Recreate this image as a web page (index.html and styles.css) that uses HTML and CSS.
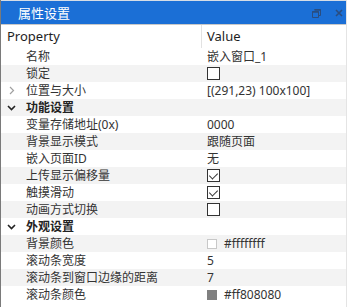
FILE: index.html
```html
<!DOCTYPE html>
<html lang="zh-CN">

<head>
  <meta charset="UTF-8">
  <meta name="viewport" content="width=device-width, initial-scale=1.0">
  <title>属性设置</title>
  <link rel="stylesheet" href="styles.css">
</head>

<body>
  <div class="panel">
    <div class="titulo">
      <span class="titulo-texto">属性设置</span>
      <span class="titulo-botones">
        <svg width="9" height="9" viewBox="0 0 9 9">
          <path d="M2.5 0.5h6v6h-2M0.5 2.5h6v6h-6z" fill="none" stroke="#2a4d80" stroke-width="1"/>
          <path d="M2.5 1h6M0.5 3h6" stroke="#2a4d80" stroke-width="1.4"/>
        </svg>
        <svg width="8" height="8" viewBox="0 0 8 8">
          <path d="M1 1l6 6M7 1l-6 6" stroke="#2a4d80" stroke-width="1.6"/>
        </svg>
      </span>
    </div>

    <div class="cabecera">
      <div class="cab-prop">Property</div>
      <div class="cab-valor">Value</div>
    </div>

    <div class="filas">
      <div class="fila"><div class="nombre"><span class="exp"></span>名称</div><div class="valor">嵌入窗口_1</div></div>
      <div class="fila"><div class="nombre"><span class="exp"></span>锁定</div><div class="valor"><span class="check"></span></div></div>
      <div class="fila"><div class="nombre"><span class="exp">
        <svg width="6" height="9" viewBox="0 0 6 9"><path d="M1 1l3.5 3.5L1 8" fill="none" stroke="#a0a0a0" stroke-width="1.2"/></svg>
      </span>位置与大小</div><div class="valor">[(291,23) 100x100]</div></div>

      <div class="fila grupo"><div class="nombre"><span class="exp">
        <svg width="9" height="6" viewBox="0 0 9 6"><path d="M1 1l3.5 3.5L8 1" fill="none" stroke="#222" stroke-width="1.6"/></svg>
      </span>功能设置</div><div class="valor"></div></div>
      <div class="fila"><div class="nombre"><span class="exp"></span>变量存储地址(0x)</div><div class="valor">0000</div></div>
      <div class="fila"><div class="nombre"><span class="exp"></span>背景显示模式</div><div class="valor">跟随页面</div></div>
      <div class="fila"><div class="nombre"><span class="exp"></span>嵌入页面ID</div><div class="valor">无</div></div>
      <div class="fila"><div class="nombre"><span class="exp"></span>上传显示偏移量</div><div class="valor"><span class="check marcado"></span></div></div>
      <div class="fila"><div class="nombre"><span class="exp"></span>触摸滑动</div><div class="valor"><span class="check marcado"></span></div></div>
      <div class="fila"><div class="nombre"><span class="exp"></span>动画方式切换</div><div class="valor"><span class="check"></span></div></div>

      <div class="fila grupo"><div class="nombre"><span class="exp">
        <svg width="9" height="6" viewBox="0 0 9 6"><path d="M1 1l3.5 3.5L8 1" fill="none" stroke="#222" stroke-width="1.6"/></svg>
      </span>外观设置</div><div class="valor"></div></div>
      <div class="fila"><div class="nombre"><span class="exp"></span>背景颜色</div><div class="valor"><span class="muestra blanco"></span>#ffffffff</div></div>
      <div class="fila"><div class="nombre"><span class="exp"></span>滚动条宽度</div><div class="valor">5</div></div>
      <div class="fila"><div class="nombre"><span class="exp"></span>滚动条到窗口边缘的距离</div><div class="valor">7</div></div>
      <div class="fila"><div class="nombre"><span class="exp"></span>滚动条颜色</div><div class="valor"><span class="muestra gris"></span>#ff808080</div></div>
    </div>
  </div>
</body>

</html>
```

FILE: styles.css
```css
body {
  margin: 0;
  background: #ffffff;
  font-family: "Noto Sans", "Noto Sans CJK SC", sans-serif;
  color: #333333;
}

.panel {
  width: 347px;
  height: 307px;
  box-sizing: border-box;
  border-left: 1px solid #7a7a7a;
  border-right: 1px solid #e4e4e4;
  overflow: hidden;
}

.titulo {
  height: 24px;
  box-sizing: border-box;
  border-top: 1px solid #d6dde6;
  background: #1b6fd6;
  display: flex;
  align-items: center;
  justify-content: space-between;
  padding: 0 3px 0 17px;
}

.titulo-texto {
  color: #ffffff;
  font-family: "Noto Sans CJK SC", sans-serif;
  font-size: 13px;
  line-height: 20px;
}

.titulo-botones {
  display: flex;
  align-items: center;
  gap: 14px;
  padding-top: 1px;
}

.titulo-botones svg {
  display: block;
}

.cabecera {
  height: 24px;
  display: grid;
  grid-template-columns: 201px 1fr;
  border-top: 1px solid #c8c8c8;
  box-sizing: border-box;
  font-size: 13px;
  line-height: 23px;
  color: #1e1e1e;
}

.cab-prop {
  padding-left: 6px;
  border-right: 1px solid #e2e2e2;
}

.cab-valor {
  padding-left: 5px;
}

.fila {
  height: 17px;
  display: grid;
  grid-template-columns: 201px 1fr;
  font-size: 12px;
  line-height: 17px;
}

.fila:nth-child(even) {
  background: #f3f3f3;
}

.nombre {
  display: flex;
  align-items: center;
  white-space: nowrap;
}

.exp {
  width: 25px;
  height: 17px;
  display: flex;
  align-items: center;
  justify-content: center;
  flex-shrink: 0;
  padding-right: 4px;
  box-sizing: border-box;
}

.exp svg {
  display: block;
}

.grupo .nombre {
  font-weight: bold;
  color: #222222;
}

.valor {
  display: flex;
  align-items: center;
  padding-left: 5px;
  white-space: nowrap;
}

.check {
  width: 13px;
  height: 13px;
  box-sizing: border-box;
  border: 1px solid #333333;
  background: #ffffff;
  position: relative;
}

.check.marcado::after {
  content: "";
  position: absolute;
  left: 3px;
  top: 1px;
  width: 4px;
  height: 7px;
  border-right: 1.3px solid #333333;
  border-bottom: 1.3px solid #333333;
  transform: rotate(45deg);
}

.muestra {
  width: 10px;
  height: 10px;
  box-sizing: border-box;
  margin-right: 7px;
}

.muestra.blanco {
  background: #ffffff;
  border: 1px solid #c8c8c8;
}

.muestra.gris {
  background: #808080;
}
```
